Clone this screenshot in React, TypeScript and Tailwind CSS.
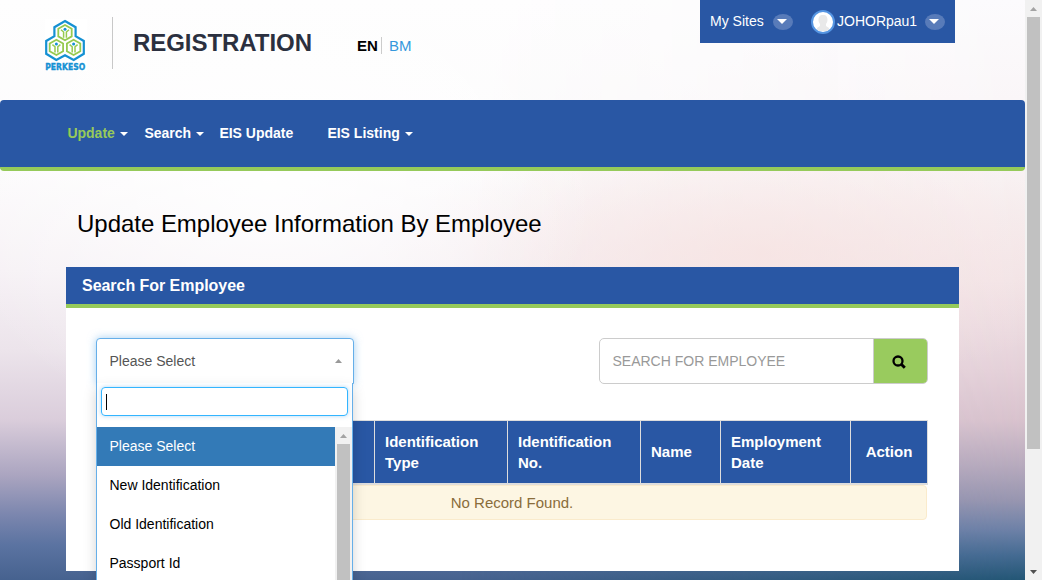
import React from "react";

const hexes = [
  { x: 20, y: 13.2 },
  { x: 11.4, y: 28 },
  { x: 28.6, y: 28 },
];

function Logo() {
  return (
    <svg width="42" height="52" viewBox="0 0 42 52" className="block shrink-0">
      <rect width="42" height="52" fill="#fff" />
      <path
        d="M20 2 30.6 8.2V17.2L38.8 22V34.8L28.7 41 20 36.2 11.3 41 1.2 34.8V22L9.4 17.2V8.2Z"
        fill="#fff"
        stroke="#1591d3"
        strokeWidth="2.2"
      />
      {hexes.map((h) => (
        <g key={h.x} transform={`translate(${h.x} ${h.y})`} fill="none" stroke="#96ca50">
          <path d="M0-7.2 6.7-3.5V4.2L0 8-6.7 4.2V-3.5Z" strokeWidth="1.8" />
          <path d="M-4-2.4-1.4-.2V5.5M4-2.4 1.4-.2V5.5" strokeWidth="1.5" />
          <circle cx="0" cy="-3" r="1.5" fill="#1591d3" stroke="none" />
        </g>
      ))}
      <text
        x="0.2"
        y="50.8"
        textLength="40"
        lengthAdjust="spacingAndGlyphs"
        fontFamily="'DejaVu Sans', sans-serif"
        fontWeight="700"
        fontSize="8.2"
        fill="#1591d3"
        stroke="#1591d3"
        strokeWidth="0.35"
      >
        PERKESO
      </text>
    </svg>
  );
}

function Caret({ className = "" }: { className?: string }) {
  return (
    <svg width="8" height="4" viewBox="0 0 8 4" className={`block shrink-0 ${className}`}>
      <path d="M0 0H8L4 4Z" fill="currentColor" />
    </svg>
  );
}

function RoundCaret() {
  return (
    <span className="flex h-4 w-[20px] items-center justify-center rounded-[50%] bg-[#587bb9] text-white">
      <svg width="10" height="5" viewBox="0 0 10 5" className="-ml-[3px]">
        <path d="M0 0H10L5 5Z" fill="currentColor" />
      </svg>
    </span>
  );
}

function Arrow({ up, color }: { up?: boolean; color: string }) {
  return (
    <svg width="7" height="4" viewBox="0 0 7 4" className="block">
      <path d={up ? "M0 4H7L3.5 0Z" : "M0 0H7L3.5 4Z"} fill={color} />
    </svg>
  );
}

function Header() {
  return (
    <header className="flex h-[100px] items-start pl-[45px] pr-[70px]">
      <div className="pt-[19px]">
        <Logo />
      </div>
      <div className="ml-[25px] mt-[17px] h-[52px] w-px bg-[#c8c8c8]" />
      <h1 className="ml-[20px] mt-[27px] w-[180px] whitespace-nowrap text-[24px] font-bold leading-8 tracking-[-0.05px] text-[#2b303f]">
        REGISTRATION
      </h1>
      <div className="ml-[44px] mt-[37px] flex h-[17px] items-center leading-[17px]">
        <span className="w-[24px] text-[15px] font-bold text-black">EN</span>
        <span className="h-[17px] w-px bg-[#ccc]" />
        <span className="ml-[7px] text-[15px] text-[#3598dc]">BM</span>
      </div>
      <div className="ml-auto flex h-[43px] w-[255px] items-center bg-[#2957a4] pl-[10px] text-[14px] text-white">
        <span className="w-[63px] whitespace-nowrap">My Sites</span>
        <RoundCaret />
        <span className="ml-[18px] flex size-[24px] shrink-0 items-center justify-center overflow-hidden rounded-full border-2 border-[#5595e2] bg-white">
          <svg width="16" height="18" viewBox="0 0 16 18">
            <path d="M8 2C4.500 2 3.500 4 3.500 7C3.500 9 4.500 10 5 11V13L2 15V18H14V15L11 13V11C11.500 10 12.500 9 12.500 7C12.500 4 11.500 2 8 2Z" fill="#e9e9e9" />
          </svg>
        </span>
        <span className="ml-[2px] w-[88px] whitespace-nowrap">JOHORpau1</span>
        <RoundCaret />
      </div>
    </header>
  );
}

function Nav() {
  return (
    <nav className="flex h-[71px] items-center rounded-[4px] border-b-4 border-[#96ca5a] bg-[#2957a4] pl-[67.400px] text-[14px] font-bold text-white">
      <a className="flex w-[77px] items-center text-[#96ca5a]">
        Update <Caret className="ml-[5.500px] text-white" />
      </a>
      <a className="flex w-[75px] items-center">
        Search <Caret className="ml-[5px]" />
      </a>
      <a className="w-[108px]">EIS Update</a>
      <a className="flex items-center">
        EIS Listing <Caret className="ml-[5.500px]" />
      </a>
    </nav>
  );
}

const options = ["Please Select", "New Identification", "Old Identification", "Passport Id"];

function IdSelect() {
  return (
    <div className="relative h-[46px] w-[258px]">
      <div className="flex h-full items-center justify-between rounded-t-[4px] border border-[#66afe9] bg-white pl-[12.5px] pr-[11px] text-[14px] text-[#555] shadow-[0_0_8px_rgba(102,175,233,0.6)]">
        Please Select
        <Arrow up color="#999" />
      </div>
      <div className="absolute left-0 top-[45px] z-10 h-[197px] w-[257px] overflow-hidden border-x border-[#66afe9] bg-white shadow-[0_6px_12px_rgba(0,0,0,0.175)]">
        <div className="px-1 pt-1">
          <div className="flex h-[29px] items-center rounded-[4px] border border-[#33b5ff] pl-1 shadow-[0_0_4px_rgba(102,175,233,0.5)]">
            <span className="h-4 w-px bg-black" />
          </div>
        </div>
        <div className="mt-[11px] flex">
          <ul className="w-[238px]">
            {options.map((o, i) => (
              <li
                key={o}
                className={`flex h-[39px] items-center pl-[12.5px] text-[14px] ${i === 0 ? "bg-[#337ab7] text-white" : "text-black"}`}
              >
                {o}
              </li>
            ))}
          </ul>
          <div className="flex w-[17px] flex-col items-center bg-[#f1f1f1]">
            <div className="flex h-[17px] items-center">
              <Arrow up color="#a3a3a3" />
            </div>
            <div className="w-[13px] flex-1 bg-[#c1c1c1]" />
          </div>
        </div>
      </div>
    </div>
  );
}

function SearchBox() {
  return (
    <div className="flex h-[46px] w-[329px] overflow-hidden rounded-[5px] border border-[#ccc] bg-white">
      <div className="flex w-[273px] shrink-0 items-center pl-[12.5px] text-[14px] text-[#999]">SEARCH FOR EMPLOYEE</div>
      <div className="flex flex-1 items-center justify-center border-l border-[#ccc] bg-[#99cb5e] pr-[3px] pt-[1px]">
        <svg width="14" height="14" viewBox="0 0 14 14" fill="none" stroke="#000">
          <circle cx="6" cy="6" r="4.5" strokeWidth="2.300" />
          <path d="M9 9 12.8 12.8" strokeWidth="2.900" />
        </svg>
      </div>
    </div>
  );
}

function Records() {
  const cell = "border-r border-[#ddd] flex items-center pl-[10px] leading-[21px]";
  return (
    <div className="w-[832px]">
      <div className="flex h-[65px] border-b-2 border-l border-t border-[#ddd] bg-[#2957a4] text-[15px] font-bold text-white">
        <div className="w-[278px] border-r border-[#ddd]" />
        <div className={`w-[133px] ${cell}`}>Identification<br />Type</div>
        <div className={`w-[133px] ${cell}`}>Identification<br />No.</div>
        <div className={`w-[80px] pb-[2px] ${cell}`}>Name</div>
        <div className={`w-[130px] ${cell}`}>Employment<br />Date</div>
        <div className="flex flex-1 items-center justify-center border-r border-[#ddd]">Action</div>
      </div>
      <div className="mr-px flex h-[35px] items-center justify-center rounded-[4px] border border-[#faebcc] bg-[#fdf6e3] pl-px pt-[2px] text-[15px] text-[#8a6d3b]">
        No Record Found.
      </div>
    </div>
  );
}

export default function App() {
  return (
    <div className="flex h-[580px] w-[1042px] overflow-hidden font-['Liberation_Sans',Arial,sans-serif]">
      <div className="relative isolate flex w-[1025px] flex-col overflow-hidden">
        <div className="absolute inset-0 -z-20 bg-[linear-gradient(180deg,#fefefe_0,#fcfbfc_170px,#f6f1f5_270px,#ece4eb_350px,#dacddb_420px,#aba5c0_475px,#7b86ae_515px,#5b73a1_545px,#46628f_580px)]" />
        <div className="absolute inset-0 -z-20 bg-[linear-gradient(180deg,#fcfbfd_0,#faf6f8_100px,#f8f2f3_180px,#f2e5e8_280px,#e4d0d8_370px,#d8c2cd_420px,#b7aabd_465px,#9896b0_500px,#6d81a7_530px,#456b92_555px,#235675_580px)] [mask-image:linear-gradient(90deg,transparent_45%,#000_100%)]" />
        <div className="absolute inset-0 -z-10 bg-[radial-gradient(ellipse_380px_130px_at_760px_255px,rgba(247,226,224,0.75),transparent)]" />
        <div className="absolute inset-0 -z-10 bg-[radial-gradient(ellipse_330px_260px_at_270px_180px,rgba(255,255,255,0.85),transparent)]" />
        <Header />
        <Nav />
        <main className="flex flex-col pl-[66px] pr-[66px]">
          <h2 className="mt-[37px] whitespace-nowrap pl-[11px] text-[24px] leading-8 tracking-[-0.025px] text-black">
            Update Employee Information By Employee
          </h2>
          <section className="mt-[27px] flex h-[304px] w-[893px] flex-col bg-white">
            <h3 className="flex h-[41px] items-center border-b-4 border-[#96ca5a] bg-[#2957a4] pl-[16px] text-[16px] font-bold tracking-[-0.04px] text-white">
              Search For Employee
            </h3>
            <div className="px-[30px] pt-[30px]">
              <div className="flex justify-between pr-[1px]">
                <IdSelect />
                <SearchBox />
              </div>
              <div className="mt-[36px]">
                <Records />
              </div>
            </div>
          </section>
        </main>
      </div>
      <div className="flex w-[17px] flex-col items-center bg-[#f1f1f1]">
        <div className="flex h-[17px] items-center">
          <Arrow up color="#a3a3a3" />
        </div>
        <div className="h-[432px] w-[13px] bg-[#c1c1c1]" />
        <div className="mt-auto flex h-[17px] items-center">
          <Arrow color="#505050" />
        </div>
      </div>
    </div>
  );
}
